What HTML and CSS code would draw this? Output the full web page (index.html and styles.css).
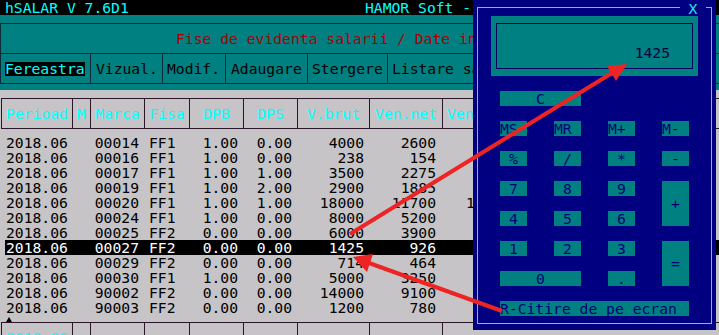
FILE: index.html
```html
<!DOCTYPE html>
<html lang="ro">
<head>
    <meta charset="UTF-8">
    <meta name="viewport" content="width=device-width, initial-scale=1.0">
    <title>hSALAR V 7.6D1</title>
    <link rel="stylesheet" href="styles.css">
</head>
<body>
    <div class="app">
        <header class="titlebar">
            <span class="app-name">hSALAR V 7.6D1</span>
            <span class="vendor">HAMOR Soft - Salarizare</span>
        </header>

        <div class="panel">
            <div class="form-title">Fise de evidenta salarii / Date introduse</div>
            <nav class="menu">
                <div class="menu-item m1"><span class="active">Fereastra</span></div>
                <div class="menu-item m2">Vizual.</div>
                <div class="menu-item m3">Modif.</div>
                <div class="menu-item m4">Adaugare</div>
                <div class="menu-item m5">Stergere</div>
                <div class="menu-item m6">Listare salarii</div>
            </nav>
        </div>

        <main class="grid-area">
            <div class="head-row">
                <div class="hc w71">Perioad</div>
                <div class="hc w18">M</div>
                <div class="hc w54">Marca</div>
                <div class="hc w45">Fisa</div>
                <div class="hc w54">DPB</div>
                <div class="hc w54">DPS</div>
                <div class="hc w72">V.brut</div>
                <div class="hc w73">Ven.net</div>
                <div class="hc last">Ven.impoz</div>
            </div>

            <div class="rows">
                <div class="row"><span class="per">2018.06</span><span></span><span class="r">00014</span><span class="fisa">FF1</span><span class="r">1.00</span><span class="r">0.00</span><span class="r">4000</span><span class="r net">2600</span><span class="ven"></span></div>
                <div class="row"><span class="per">2018.06</span><span></span><span class="r">00016</span><span class="fisa">FF1</span><span class="r">1.00</span><span class="r">0.00</span><span class="r">238</span><span class="r net">154</span><span class="ven"></span></div>
                <div class="row"><span class="per">2018.06</span><span></span><span class="r">00017</span><span class="fisa">FF1</span><span class="r">1.00</span><span class="r">1.00</span><span class="r">3500</span><span class="r net">2275</span><span class="ven"></span></div>
                <div class="row"><span class="per">2018.06</span><span></span><span class="r">00019</span><span class="fisa">FF1</span><span class="r">1.00</span><span class="r">2.00</span><span class="r">2900</span><span class="r net">1885</span><span class="ven"></span></div>
                <div class="row"><span class="per">2018.06</span><span></span><span class="r">00020</span><span class="fisa">FF1</span><span class="r">1.00</span><span class="r">1.00</span><span class="r">18000</span><span class="r net">11700</span><span class="ven">11700</span></div>
                <div class="row"><span class="per">2018.06</span><span></span><span class="r">00024</span><span class="fisa">FF1</span><span class="r">1.00</span><span class="r">0.00</span><span class="r">8000</span><span class="r net">5200</span><span class="ven"></span></div>
                <div class="row"><span class="per">2018.06</span><span></span><span class="r">00025</span><span class="fisa">FF2</span><span class="r">0.00</span><span class="r">0.00</span><span class="r">6000</span><span class="r net">3900</span><span class="ven"></span></div>
                <div class="row sel"><span class="per">2018.06</span><span></span><span class="r">00027</span><span class="fisa">FF2</span><span class="r">0.00</span><span class="r">0.00</span><span class="r">1425</span><span class="r net">926</span><span class="ven"></span></div>
                <div class="row"><span class="per">2018.06</span><span></span><span class="r">00029</span><span class="fisa">FF2</span><span class="r">0.00</span><span class="r">0.00</span><span class="r">714</span><span class="r net">464</span><span class="ven"></span></div>
                <div class="row"><span class="per">2018.06</span><span></span><span class="r">00030</span><span class="fisa">FF1</span><span class="r">1.00</span><span class="r">0.00</span><span class="r">5000</span><span class="r net">3250</span><span class="ven"></span></div>
                <div class="row"><span class="per">2018.06</span><span></span><span class="r">90002</span><span class="fisa">FF2</span><span class="r">0.00</span><span class="r">0.00</span><span class="r">14000</span><span class="r net">9100</span><span class="ven"></span></div>
                <div class="row"><span class="per">2018.06</span><span></span><span class="r">90003</span><span class="fisa">FF2</span><span class="r">0.00</span><span class="r">0.00</span><span class="r">1200</span><span class="r net">780</span><span class="ven"></span></div>
            </div>

            <div class="scroll-mark"><span class="tri"></span></div>

            <div class="head-row foot-row">
                <div class="hc w71">2018.06</div>
                <div class="hc w18"></div>
                <div class="hc w54"></div>
                <div class="hc w45"></div>
                <div class="hc w54"></div>
                <div class="hc w54"></div>
                <div class="hc w72"></div>
                <div class="hc w73"></div>
                <div class="hc last"></div>
            </div>
        </main>
    </div>

    <!-- calculator window -->
    <div class="calc">
        <div class="calc-frame">
            <span class="calc-close">X</span>
            <div class="display">
                <div class="display-inner">1425</div>
            </div>
            <div class="keys">
                <div class="key span2">C</div>
                <div class="key left newrow">MS</div>
                <div class="key left">MR</div>
                <div class="key left">M+</div>
                <div class="key left">M-</div>
                <div class="key">%</div>
                <div class="key">/</div>
                <div class="key">*</div>
                <div class="key">-</div>
                <div class="key">7</div>
                <div class="key">8</div>
                <div class="key">9</div>
                <div class="key tall">+</div>
                <div class="key">4</div>
                <div class="key">5</div>
                <div class="key">6</div>
                <div class="key">1</div>
                <div class="key">2</div>
                <div class="key">3</div>
                <div class="key tall">=</div>
                <div class="key span2">0</div>
                <div class="key">.</div>
                <div class="key left full">R-Citire de pe ecran</div>
            </div>
        </div>
    </div>

    <svg class="arrows" width="719" height="335" viewBox="0 0 719 335">
        <line x1="350" y1="234" x2="612" y2="73" stroke="#ee2424" stroke-width="4"/>
        <polygon points="627,64 616,81 607,66" fill="#ee2424"/>
        <line x1="502" y1="311" x2="369" y2="263" stroke="#ee2424" stroke-width="4"/>
        <polygon points="353,257 373,254 367,272" fill="#ee2424"/>
    </svg>
</body>
</html>
```

FILE: styles.css
```css
body {
    margin: 0;
    width: 719px;
    height: 335px;
    overflow: hidden;
    position: relative;
    background-color: #c6c4c6;
    font-family: "DejaVu Sans Mono", monospace;
    font-size: 14.7px;
}

.titlebar {
    display: flex;
    height: 15px;
    line-height: 16px;
    background-color: #000;
    color: #00ffff;
    white-space: nowrap;
    overflow: hidden;
}

.app-name {
    flex: none;
    width: 360px;
    padding-left: 5px;
}

.panel {
    background-color: #008080;
    padding: 8px 0 6px;
}

.form-title {
    height: 29px;
    line-height: 29px;
    padding-left: 175px;
    border: 1px solid #0c2a38;
    border-right: none;
    color: #a80000;
    white-space: nowrap;
}

.menu {
    display: flex;
    height: 29px;
    border-left: 1px solid #0c2a38;
    border-bottom: 1px solid #0c2a38;
    color: #000;
}

.menu-item {
    flex: none;
    display: flex;
    align-items: center;
    box-sizing: border-box;
    padding-left: 5px;
    border-right: 1px solid #0c2a38;
    white-space: nowrap;
}

.m1 { width: 90px; padding-left: 4px; }
.m2 { width: 72px; }
.m3 { width: 63px; padding-left: 4px; }
.m4 { width: 82px; }
.m5 { width: 80px; padding-left: 4px; }
.m6 { flex: 1; border-right: none; padding-left: 4px; }

.active {
    display: block;
    line-height: 14px;
    background-color: #000;
    color: #00ffff;
}

.grid-area {
    padding-top: 8px;
}

.head-row {
    display: flex;
    height: 29px;
    line-height: 29px;
    margin-left: 1px;
    border: 1px solid #2a1628;
    border-right: none;
    color: #00ffff;
}

.hc {
    flex: none;
    box-sizing: border-box;
    border-right: 1px solid #2a1628;
    text-align: center;
    white-space: nowrap;
    overflow: hidden;
}

.w71 { width: 71px; }
.w18 { width: 18px; }
.w54 { width: 54px; }
.w45 { width: 45px; }
.w72 { width: 72px; }
.w73 { width: 73px; }

.hc.last {
    flex: 1;
    text-align: left;
    padding-left: 4px;
    border-right: none;
}

.rows {
    margin-top: 6px;
}

.row {
    display: grid;
    grid-template-columns: 67px 18px 54px 45px 54px 54px 72px 73px 1fr;
    height: 15px;
    line-height: 15px;
    margin-left: 5px;
    color: #000;
    white-space: nowrap;
}

.row.sel {
    background-color: #000;
    color: #fff;
}

.per { padding-left: 1px; }
.fisa { padding-left: 5px; }
.r { text-align: right; padding-right: 5px; }
.r.net { padding-right: 6px; }
.ven { padding-left: 24px; }

.scroll-mark {
    height: 7px;
    box-sizing: border-box;
    padding: 2px 0 0 6px;
}

.tri {
    display: block;
    width: 0;
    height: 0;
    border-left: 3.5px solid transparent;
    border-right: 3.5px solid transparent;
    border-bottom: 5px solid #000;
}

/* calculator */
.calc {
    position: absolute;
    left: 473px;
    top: 0;
    width: 243px;
    height: 330px;
    box-sizing: border-box;
    padding: 7px 4px 6px;
    background-color: #000080;
}

.calc-frame {
    position: relative;
    height: 100%;
    box-sizing: border-box;
    border: 1px solid #22e4f0;
}

.calc-close {
    position: absolute;
    left: 202px;
    top: -7px;
    width: 26px;
    height: 14px;
    line-height: 15px;
    text-align: center;
    background-color: #000080;
    color: #22e4f0;
}

.display {
    width: 207px;
    height: 60px;
    margin: 8px 0 0 13px;
    padding: 7px 5px;
    box-sizing: border-box;
    background-color: #008080;
}

.display-inner {
    height: 100%;
    box-sizing: border-box;
    border: 1px solid #00005a;
    padding: 21px 22px 0 0;
    line-height: 15px;
    text-align: right;
    color: #000040;
}

.keys {
    display: grid;
    grid-template-columns: repeat(4, 27px);
    grid-auto-rows: 15px;
    gap: 15px 27px;
    margin: 15px 0 0 22px;
}

.key {
    background-color: #008080;
    color: #00007a;
    line-height: 15px;
    text-align: center;
    white-space: nowrap;
}

.key.left { text-align: left; }
.key.span2 { grid-column: span 2; }
.key.newrow { grid-column-start: 1; }
.key.full { grid-column: 1 / -1; }

.key.tall {
    grid-row: span 2;
    display: flex;
    align-items: center;
    justify-content: center;
}

.arrows {
    position: absolute;
    left: 0;
    top: 0;
    pointer-events: none;
}
```
